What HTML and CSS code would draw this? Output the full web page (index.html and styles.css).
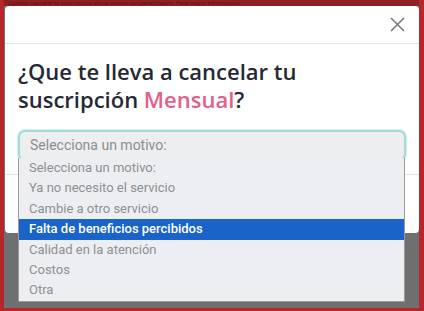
FILE: index.html
```html
<!DOCTYPE html>
<html lang="es">
<head>
<meta charset="utf-8">
<link rel="stylesheet" href="styles.css">
</head>
<body>
<div class="screen">
  <div class="bg-strip">Quieres cancelar tu suscripción ahora mismo sin penalización. Para mayor información</div>
  <div class="modal">
    <div class="modal-header">
      <span class="close" aria-label="Cerrar">
        <svg width="15" height="15" viewBox="0 0 15 15"><path d="M1 1L14 14M14 1L1 14" stroke="#7a7a7a" stroke-width="1.6" fill="none"/></svg>
      </span>
    </div>
    <div class="modal-body">
      <h2 class="title">¿Que te lleva a cancelar tu suscripción <span class="pink">Mensual</span>?</h2>
      <div class="select">Selecciona un motivo:</div>
    </div>
    <div class="modal-footer"></div>
  </div>
  <ul class="dropdown">
    <li>Selecciona un motivo:</li>
    <li>Ya no necesito el servicio</li>
    <li>Cambie a otro servicio</li>
    <li class="active">Falta de beneficios percibidos</li>
    <li>Calidad en la atención</li>
    <li>Costos</li>
    <li>Otra</li>
  </ul>
</div>
</body>
</html>
```
FILE: styles.css
```css
html, body {
  margin: 0;
  padding: 0;
}
body {
  width: 424px;
  height: 311px;
  overflow: hidden;
  font-family: Roboto, "Liberation Sans", sans-serif;
}
.screen {
  position: relative;
  width: 424px;
  height: 311px;
  box-sizing: border-box;
  border-style: solid;
  border-color: #b5272c;
  border-width: 0 5px 3px 4px;
  background: #6f6f6f;
  display: flex;
  flex-direction: column;
}
.bg-strip {
  height: 6px;
  flex: none;
  background: #8f2024;
  color: #5c1518;
  font-size: 6px;
  line-height: 6px;
  white-space: nowrap;
  overflow: hidden;
  padding-left: 4px;
}
.modal {
  margin: 0 0 0 1px;
  width: 414px;
  background: #fff;
  border-radius: 4px;
  display: flex;
  flex-direction: column;
}
.modal-header {
  height: 37px;
  border-bottom: 1px solid #e2e4e7;
  display: flex;
  justify-content: flex-end;
  align-items: center;
  padding-right: 14px;
}
.close {
  display: flex;
  margin-top: 0;
}
.modal-body {
  padding: 13px 13px 13px 13px;
}
.title {
  margin: 0 0 17px 0;
  font-family: "Open Sans", Lato, sans-serif;
  font-weight: 600;
  font-size: 22px;
  line-height: 28px;
  color: #252935;
}
.pink {
  color: #e2608a;
}
.select {
  height: 27px;
  border: 2px solid #9fdcd6;
  border-radius: 7px;
  background: #eceef0;
  color: #8b8d90;
  font-size: 14px;
  line-height: 27px;
  padding-left: 10px;
  box-shadow: 0 0 0 1px #d5f0ee;
}
.modal-footer {
  height: 58px;
  border-top: 1px solid #e2e4e7;
}
.dropdown {
  position: absolute;
  left: 14px;
  top: 158px;
  width: 387px;
  margin: 0;
  padding: 0;
  list-style: none;
  background: #eceef1;
  border: 1px solid #9a9a9a;
  border-top: none;
  box-sizing: border-box;
}
.dropdown li {
  height: 20.4px;
  line-height: 20.4px;
  padding-left: 10px;
  font-size: 13px;
  color: #8e9093;
}
.dropdown li.active {
  background: #1a63c9;
  color: #fff;
  font-weight: 500;
}
```
